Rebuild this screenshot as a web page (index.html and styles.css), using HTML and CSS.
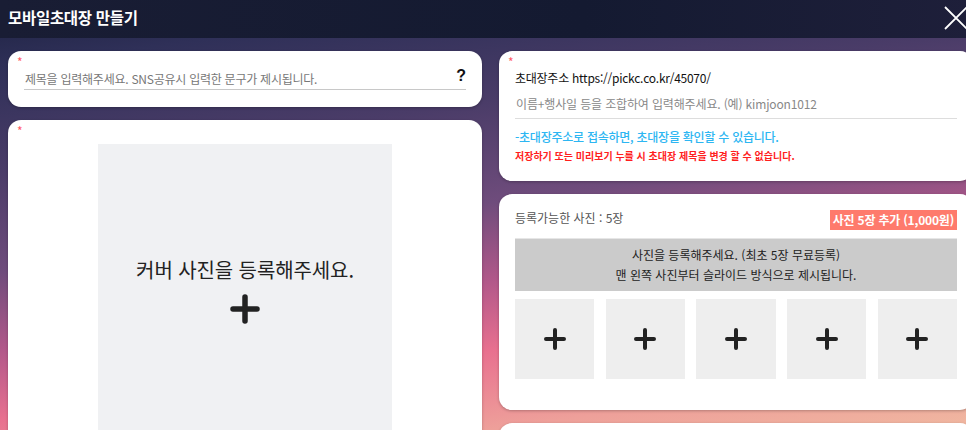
FILE: index.html
```html
<!DOCTYPE html>
<html lang="ko">
<head>
<meta charset="utf-8">
<title>모바일초대장 만들기</title>
<link rel="stylesheet" href="styles.css">
</head>
<body>
<div class="app">
  <header class="topbar">
    <h1 class="title">모바일초대장 만들기</h1>
    <svg class="close" width="24" height="24" viewBox="0 0 24 24"><path d="M1 1 L23 23 M23 1 L1 23" stroke="#fff" stroke-width="1.8" fill="none"/></svg>
  </header>
  <main class="grid">
    <div class="col">
      <section class="card card-title">
        <div class="req">*</div>
        <div class="input-row">
          <span class="ph">제목을 입력해주세요. SNS공유시 입력한 문구가 제시됩니다.</span>
          <span class="help">?</span>
        </div>
      </section>
      <section class="card card-cover">
        <div class="req">*</div>
        <div class="cover">
          <div class="cover-text">커버 사진을 등록해주세요.</div>
          <svg class="cover-plus" width="30" height="30" viewBox="0 0 30 30"><path d="M15 3 V27 M3 15 H27" stroke="#222" stroke-width="5.5" stroke-linecap="round"/></svg>
        </div>
      </section>
    </div>
    <div class="col">
      <section class="card card-url">
        <div class="req">*</div>
        <div class="url-label">초대장주소 https://pickc.co.kr/45070/</div>
        <div class="url-input"><span class="ph2">이름+행사일 등을 조합하여 입력해주세요. (예) kimjoon1012</span></div>
        <div class="note-blue">-초대장주소로 접속하면, 초대장을 확인할 수 있습니다.</div>
        <div class="note-red">저장하기 또는 미리보기 누를 시 초대장 제목을 변경 할 수 없습니다.</div>
      </section>
      <section class="card card-photos">
        <div class="photo-head">
          <span class="photo-count">등록가능한 사진 : 5장</span>
          <span class="add-btn">사진 5장 추가 (1,000원)</span>
        </div>
        <div class="photo-info">사진을 등록해주세요. (최초 5장 무료등록)<br>맨 왼쪽 사진부터 슬라이드 방식으로 제시됩니다.</div>
        <div class="tiles">
          <div class="tile"><svg width="22" height="22" viewBox="0 0 22 22"><path d="M11 2 V20 M2 11 H20" stroke="#222" stroke-width="4" stroke-linecap="round"/></svg></div>
          <div class="tile"><svg width="22" height="22" viewBox="0 0 22 22"><path d="M11 2 V20 M2 11 H20" stroke="#222" stroke-width="4" stroke-linecap="round"/></svg></div>
          <div class="tile"><svg width="22" height="22" viewBox="0 0 22 22"><path d="M11 2 V20 M2 11 H20" stroke="#222" stroke-width="4" stroke-linecap="round"/></svg></div>
          <div class="tile"><svg width="22" height="22" viewBox="0 0 22 22"><path d="M11 2 V20 M2 11 H20" stroke="#222" stroke-width="4" stroke-linecap="round"/></svg></div>
          <div class="tile"><svg width="22" height="22" viewBox="0 0 22 22"><path d="M11 2 V20 M2 11 H20" stroke="#222" stroke-width="4" stroke-linecap="round"/></svg></div>
        </div>
      </section>
      <section class="card card-next"></section>
    </div>
  </main>
</div>
</body>
</html>
```

FILE: styles.css
```css
html, body {
  margin: 0;
  padding: 0;
  height: 430px;
  overflow: hidden;
}
body {
  font-family: "Noto Sans CJK KR", "Noto Sans", sans-serif;
  background: #1a1d36;
}
.app {
  width: 973px;
  height: 430px;
  overflow: hidden;
  background: linear-gradient(172deg, #1c2140 0%, #2f3058 12%, #4a3c68 30%, #6f4c7c 48%, #b3588a 62%, #e8708f 74%, #eea09a 88%, #f0b9a1 100%);
}
.topbar {
  height: 38px;
  background: linear-gradient(90deg, #191d34 0%, #141a31 60%, #1e1f3a 100%);
  display: flex;
  align-items: center;
  justify-content: space-between;
  padding: 0 5px 0 8px;
}
.title {
  margin: 0;
  color: #fff;
  font-size: 15.5px;
  font-weight: 700;
  letter-spacing: -0.3px;
  line-height: 1;
  margin-top: -2px;
}
.close {
  display: block;
  margin-top: -2px;
}
.grid {
  display: grid;
  grid-template-columns: 474px 474px;
  column-gap: 17px;
  padding: 13px 0 0 8px;
}
.col {
  display: flex;
  flex-direction: column;
  gap: 13px;
}
.card {
  background: #fff;
  border-radius: 13px;
  box-shadow: 0 1px 3px rgba(0,0,0,0.25);
  padding: 6px 16px 16px;
}
.req {
  color: #ff5a66;
  font-size: 12px;
  line-height: 10px;
  height: 10px;
  margin-left: -7px;
}
.card-title {
  height: 56px;
  box-sizing: border-box;
}
.input-row {
  height: 23px;
  border-bottom: 1px solid #c8c8c8;
  display: flex;
  align-items: center;
  justify-content: space-between;
  box-sizing: border-box;
  padding: 0 0 0 1px;
}
.ph {
  color: #777;
  font-size: 12px;
  letter-spacing: -0.25px;
}
.help {
  font-size: 16px;
  font-weight: 700;
  color: #111;
  font-family: "Liberation Sans", sans-serif;
  margin-top: -4px;
}
.card-cover {
  height: 400px;
}
.cover {
  margin: 8px auto 0;
  width: 294px;
  height: 380px;
  background: #f0f1f3;
  display: flex;
  flex-direction: column;
  align-items: center;
  padding-top: 112px;
  box-sizing: border-box;
}
.cover-text {
  font-size: 20px;
  color: #222;
  letter-spacing: -0.1px;
  line-height: 28px;
}
.cover-plus {
  margin-top: 10px;
}
.card-url {
  height: 130px;
  box-sizing: border-box;
}
.url-label {
  font-size: 12px;
  color: #111;
  line-height: 22px;
  letter-spacing: -0.25px;
}
.url-input {
  height: 30px;
  border-bottom: 1px solid #ddd;
  box-sizing: border-box;
  display: flex;
  align-items: center;
  padding-left: 1px;
}
.ph2 {
  font-size: 12px;
  color: #888;
  letter-spacing: -0.15px;
}
.note-blue {
  margin-top: 8px;
  font-size: 12px;
  font-weight: 500;
  color: #2db6f2;
  line-height: 20px;
  letter-spacing: -0.25px;
}
.note-red {
  font-size: 10px;
  color: #ff1e1e;
  line-height: 18px;
  font-weight: 700;
}
.card-photos {
  padding: 16px 16px 30px;
  height: 216px;
  box-sizing: border-box;
}
.photo-head {
  display: flex;
  justify-content: space-between;
  align-items: flex-start;
  height: 29px;
  border-bottom: 1px solid #e6e6e6;
  box-sizing: border-box;
}
.photo-count {
  font-size: 12px;
  color: #555;
  line-height: 18px;
  margin-top: -1px;
}
.add-btn {
  background: #fe7a6c;
  color: #fff;
  font-size: 12px;
  font-weight: 700;
  line-height: 20px;
  padding: 0 3px;
  letter-spacing: -0.2px;
}
.photo-info {
  background: #cbcbcb;
  height: 52px;
  box-sizing: border-box;
  padding: 6px 0;
  text-align: center;
  font-size: 12px;
  color: #222;
  line-height: 20px;
}
.tiles {
  margin-top: 8px;
  display: grid;
  grid-template-columns: repeat(5, 1fr);
  column-gap: 11.5px;
}
.tile {
  height: 80px;
  background: #eeeeee;
  display: flex;
  align-items: center;
  justify-content: center;
}
.card-next {
  height: 60px;
}
```
